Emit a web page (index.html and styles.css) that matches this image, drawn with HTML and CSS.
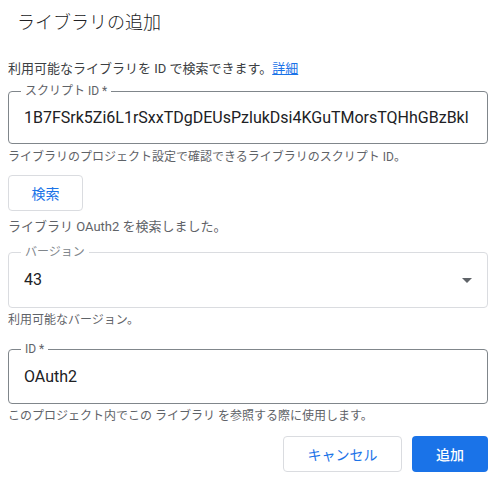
FILE: index.html
```html
<!DOCTYPE html>
<html lang="ja">
<head>
<meta charset="utf-8">
<link rel="stylesheet" href="styles.css">
</head>
<body>
<div class="dialog">
  <h1 class="title">ライブラリの追加</h1>
  <p class="desc">利用可能なライブラリを ID で検索できます。<a class="link" href="#">詳細</a></p>

  <div class="field field-script">
    <span class="label">スクリプト ID *</span>
    <div class="value">1B7FSrk5Zi6L1rSxxTDgDEUsPzlukDsi4KGuTMorsTQHhGBzBkl</div>
  </div>
  <p class="hint hint-script">ライブラリのプロジェクト設定で確認できるライブラリのスクリプト ID。</p>

  <button class="btn btn-outline btn-search">検索</button>
  <p class="found">ライブラリ OAuth2 を検索しました。</p>

  <div class="field field-version">
    <span class="label label-light">バージョン</span>
    <div class="value">43</div>
    <svg class="arrow" width="10" height="5" viewBox="0 0 10 5"><path d="M0 0h10L5 5z" fill="#5f6368"/></svg>
  </div>
  <p class="hint">利用可能なバージョン。</p>

  <div class="field field-id">
    <span class="label">ID *</span>
    <div class="value">OAuth2</div>
  </div>
  <p class="hint">このプロジェクト内でこの ライブラリ を参照する際に使用します。</p>

  <div class="actions">
    <button class="btn btn-outline btn-cancel">キャンセル</button>
    <button class="btn btn-primary">追加</button>
  </div>
</div>
</body>
</html>
```

FILE: styles.css
```css
* { box-sizing: border-box; }
html, body {
  margin: 0;
  padding: 0;
  background: #fff;
}
body {
  font-family: Roboto, "Noto Sans CJK JP", sans-serif;
  color: #202124;
}
.dialog {
  width: 493px;
  padding: 0 5px 0 8px;
  display: flex;
  flex-direction: column;
}
.title {
  margin: 11px 0 0 9px;
  font-size: 18px;
  line-height: 24px;
  font-weight: 300;
  color: #202124;
}
.desc {
  margin: 24px 0 0;
  font-size: 13px;
  line-height: 20px;
  color: #3c4043;
}
.link {
  color: #1a73e8;
  text-decoration: underline;
}
.field {
  position: relative;
  width: 480px;
  border: 1px solid #80868b;
  border-radius: 4px;
  display: flex;
  align-items: center;
  padding: 0 15px;
}
.field-script { margin-top: 12px; height: 53px; }
.field-version { margin-top: 15px; height: 56px; border-color: #dadce0; justify-content: space-between; }
.field-id { margin-top: 21px; height: 55px; }
.label {
  position: absolute;
  left: 12px;
  top: -9px;
  padding: 0 4px;
  background: #fff;
  font-size: 12px;
  line-height: 16px;
  color: #5f6368;
}
.label-light { color: #80868b; }
.value {
  font-size: 16px;
  line-height: 24px;
  color: #202124;
  white-space: nowrap;
  overflow: hidden;
}
.arrow { flex: none; }
.hint {
  margin: 4px 0 0;
  font-size: 12px;
  line-height: 16px;
  color: #5f6368;
}
.hint-script { margin-top: 5px; }
.found {
  margin: 6px 0 0;
  font-size: 13px;
  line-height: 20px;
  color: #5f6368;
}
.btn {
  height: 36px;
  border-radius: 4px;
  font-family: Roboto, "Noto Sans CJK JP", sans-serif;
  font-size: 14px;
  font-weight: 400;
  cursor: pointer;
}
.btn-outline {
  background: #fff;
  border: 1px solid #dadce0;
  color: #1a73e8;
}
.btn-search {
  margin-top: 10px;
  width: 75px;
  align-self: flex-start;
}
.btn-cancel { width: 119px; }
.btn-primary {
  width: 76px;
  background: #1a73e8;
  border: none;
  color: #fff;
  font-weight: 500;
}
.actions {
  margin-top: 12px;
  width: 480px;
  display: flex;
  justify-content: flex-end;
  gap: 10px;
}
```
